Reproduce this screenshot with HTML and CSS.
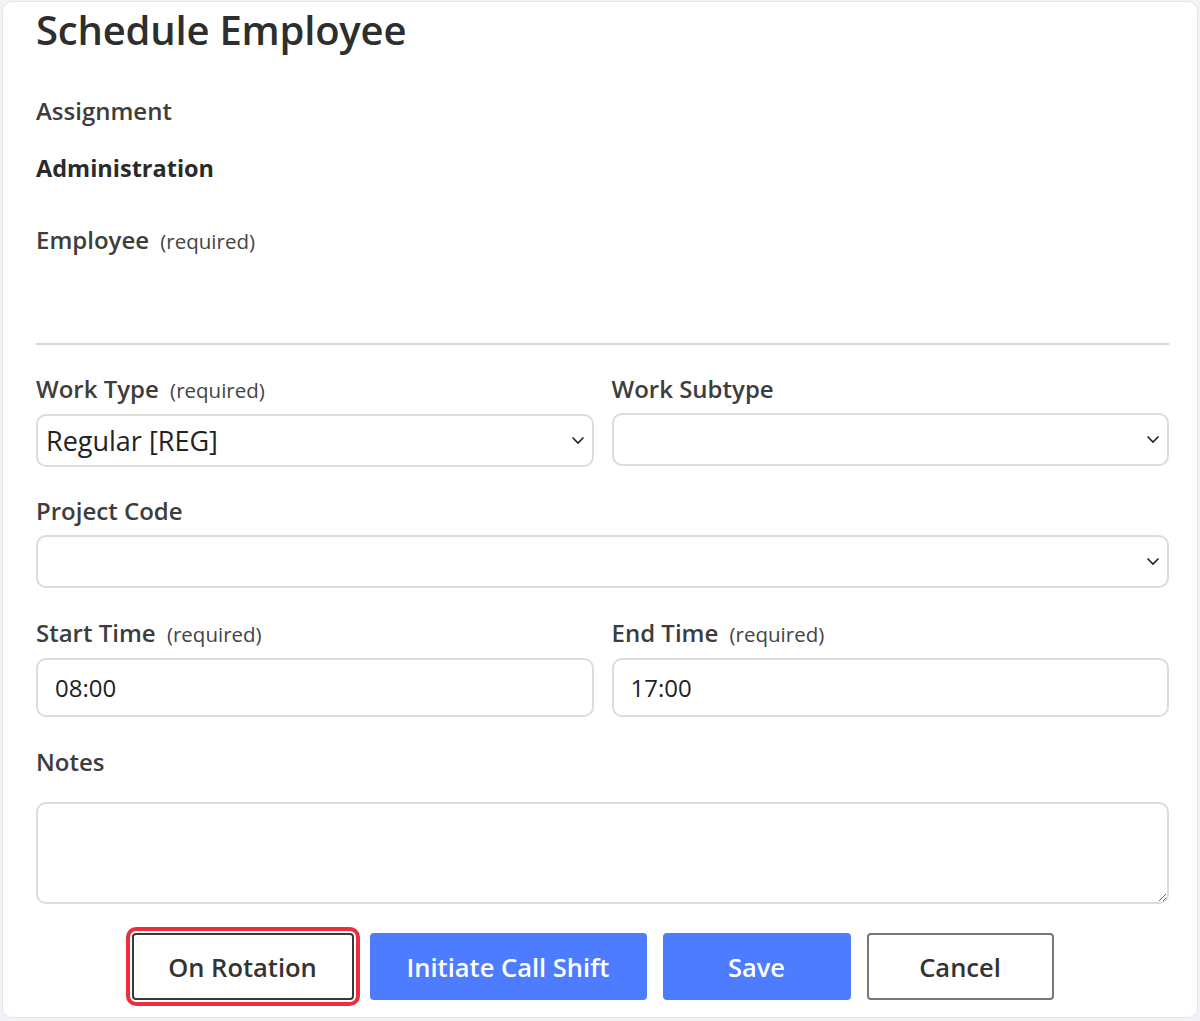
FILE: index.html
```html
<!DOCTYPE html>
<html lang="en">
<head>
  <meta charset="UTF-8" />
  <meta name="viewport" content="width=device-width, initial-scale=1" />
  <title>Schedule Employee</title>
  <link rel="stylesheet" href="styles.css">
</head>
<body>
  <div class="modal">
    <h1>Schedule Employee</h1>

    <div class="section-label">Assignment</div>
    <div class="assignment-name">Administration</div>

    <div class="field-label employee-label">Employee <span class="req">(required)</span></div>
    <div class="employee-slot"></div>

    <hr class="divider">

    <div class="row">
      <div class="field field-tight">
        <label class="field-label">Work Type <span class="req">(required)</span></label>
        <div class="select">
          <span class="select-value">Regular [REG]</span>
          <svg class="chevron" width="14" height="9" viewBox="0 0 14 9"><path d="M1.5 1.5 L7 7 L12.5 1.5" fill="none" stroke="#222" stroke-width="1.6"/></svg>
        </div>
      </div>
      <div class="field field-tight">
        <label class="field-label">Work Subtype</label>
        <div class="select">
          <span class="select-value"></span>
          <svg class="chevron" width="14" height="9" viewBox="0 0 14 9"><path d="M1.5 1.5 L7 7 L12.5 1.5" fill="none" stroke="#222" stroke-width="1.6"/></svg>
        </div>
      </div>
    </div>

    <div class="field">
      <label class="field-label">Project Code</label>
      <div class="select">
        <span class="select-value"></span>
        <svg class="chevron" width="14" height="9" viewBox="0 0 14 9"><path d="M1.5 1.5 L7 7 L12.5 1.5" fill="none" stroke="#222" stroke-width="1.6"/></svg>
      </div>
    </div>

    <div class="row">
      <div class="field">
        <label class="field-label">Start Time <span class="req">(required)</span></label>
        <input class="text-input" type="text" value="08:00">
      </div>
      <div class="field">
        <label class="field-label">End Time <span class="req">(required)</span></label>
        <input class="text-input" type="text" value="17:00">
      </div>
    </div>

    <div class="field">
      <label class="field-label notes-label">Notes</label>
      <textarea class="notes"></textarea>
    </div>

    <div class="actions">
      <button class="btn btn-outline focused">On Rotation</button>
      <button class="btn btn-primary">Initiate Call Shift</button>
      <button class="btn btn-primary btn-save">Save</button>
      <button class="btn btn-outline btn-cancel">Cancel</button>
    </div>
  </div>
</body>
</html>
```

FILE: styles.css
```css
body {
  margin: 0;
  padding: 1px 2px;
  background: #f3f3f7;
  font-family: 'Open Sans', 'Noto Sans', sans-serif;
  color: #333;
}
.modal {
  background: #fff;
  border: 1px solid #e4e4ea;
  border-radius: 10px;
  padding: 4px 28px 17px 33px;
}
h1 {
  font-size: 40px;
  font-weight: 600;
  line-height: 48px;
  margin: 0 0 41px;
  color: #2e2e2e;
  letter-spacing: -0.2px;
}
.section-label {
  font-size: 24px;
  font-weight: 600;
  line-height: 32px;
  color: #3d3d3d;
}
.assignment-name {
  font-size: 23.5px;
  font-weight: 700;
  line-height: 30px;
  margin-top: 26px;
  color: #2a2a2a;
}
.field-label {
  display: block;
  font-size: 24px;
  font-weight: 600;
  line-height: 32px;
  color: #3d3d3d;
  margin-bottom: 8px;
}
.req {
  font-size: 20.5px;
  font-weight: 400;
  color: #444;
  margin-left: 5px;
}
.employee-label {
  margin-top: 41px;
  margin-bottom: 0;
}
.employee-slot {
  height: 86px;
}
.divider {
  border: none;
  border-top: 2px solid #d6d6d6;
  margin: 0 0 28px;
}
.row {
  display: grid;
  grid-template-columns: 1fr 1fr;
  gap: 18px;
}
.field {
  margin-bottom: 29px;
}
.field-tight {
  margin-bottom: 28px;
}
.select {
  height: 53px;
  box-sizing: border-box;
  border: 2px solid #dcdcdc;
  border-radius: 10px;
  display: flex;
  align-items: center;
  justify-content: space-between;
  padding: 0 7px 0 8px;
}
.select-value {
  font-size: 27px;
  color: #222;
}
.text-input {
  display: block;
  width: 100%;
  height: 59px;
  box-sizing: border-box;
  border: 2px solid #dcdcdc;
  border-radius: 10px;
  padding: 0 17px;
  font-family: inherit;
  font-size: 24px;
  color: #222;
}
.notes-label {
  margin-bottom: 24px;
}
.notes {
  display: block;
  width: 100%;
  height: 102px;
  box-sizing: border-box;
  border: 2px solid #dcdcdc;
  border-radius: 10px;
  font-family: inherit;
  font-size: 22px;
}
.actions {
  display: flex;
  justify-content: center;
  gap: 16px;
  padding-right: 20px;
  margin-top: 31px;
}
.field + .actions {
  margin-top: 2px;
}
.btn {
  height: 67px;
  box-sizing: border-box;
  border-radius: 4px;
  font-family: inherit;
  font-size: 25.5px;
  font-weight: 600;
  padding: 0;
}
.btn-outline {
  background: #fff;
  border: 2px solid #777;
  color: #333;
  width: 222px;
}
.btn-primary {
  background: #4d7cfe;
  border: none;
  color: #fff;
  width: 277px;
}
.btn-save { width: 188px; }
.btn-cancel { width: 187px; }
.focused {
  border-color: #3a3a3a;
  outline: 4px solid #ec2f3f;
  outline-offset: 2px;
}
```
